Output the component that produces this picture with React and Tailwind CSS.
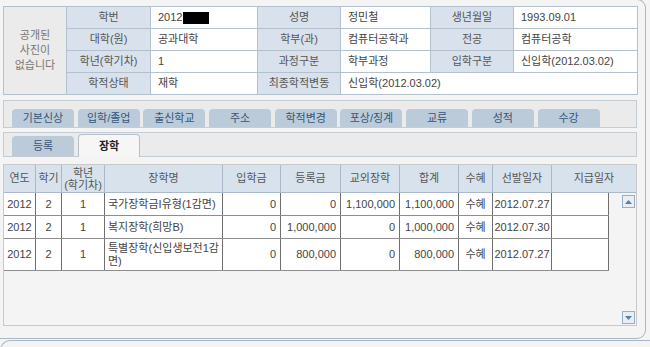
import React from "react";

const font = "font-['Liberation_Sans','Noto_Sans_CJK_KR',sans-serif]";
const lab = "bg-[#d9e2ec] border border-[#b3c1cf] text-center text-[#555] font-normal";
const val = "bg-white border border-[#b3c1cf] pl-[7px] text-[#444] text-left";

const mainTabs = ["기본신상", "입학/졸업", "출신학교", "주소", "학적변경", "포상/징계", "교류", "성적", "수강"];

const rows = [
  ["2012", "2", "1", "국가장학금I유형(1감면)", "0", "0", "1,100,000", "1,100,000", "수혜", "2012.07.27"],
  ["2012", "2", "1", "복지장학(희망B)", "0", "1,000,000", "0", "1,000,000", "수혜", "2012.07.30"],
  ["2012", "2", "1", "특별장학(신입생보전1감\n면)", "0", "800,000", "0", "800,000", "수혜", "2012.07.27"],
];

const align = ["text-center", "text-center", "text-center", "text-left pl-[3px] whitespace-pre-line", "text-right pr-[4px]", "text-right pr-[4px]", "text-right pr-[4px]", "text-right pr-[4px]", "text-center", "text-center"];

function Arrow({ down }) {
  return (
    <div className="w-[13px] h-[13px] border border-[#98aec3] bg-[#e8eef4] flex items-center justify-center">
      <svg width="7" height="4" viewBox="0 0 7 4">
        {down ? <path d="M0 0 H7 L3.5 4 Z" fill="#5b7ea3" /> : <path d="M0 4 H7 L3.5 0 Z" fill="#5b7ea3" />}
      </svg>
    </div>
  );
}

export default function App() {
  return (
    <div className={`w-[650px] h-[347px] overflow-hidden bg-[#f4f4f4] text-[11px] ${font}`}>
      <div className="w-[646px] h-[340px] -mt-px border-t border-r border-b border-[#a9b7c6] rounded-r-[9px] pl-[3px] pr-[8px] pt-[6px] flex flex-col">
        <table className="w-[634px] table-fixed border-collapse">
          <colgroup>
            <col className="w-[63px]" />
            <col className="w-[84px]" />
            <col className="w-[107px]" />
            <col className="w-[83px]" />
            <col className="w-[90px]" />
            <col className="w-[83px]" />
            <col className="w-[124px]" />
          </colgroup>
          <tbody>
            <tr className="h-[22px]">
              <td rowSpan={4} className="bg-[#ebebeb] border border-[#b3c1cf] text-center text-[#777] leading-[15px]">
                공개된<br />사진이<br />없습니다
              </td>
              <th className={lab}>학번</th>
              <td className={val}>
                <span className="inline-flex items-center">2012<span className="inline-block w-[26px] h-[12px] bg-black ml-[1px]" /></span>
              </td>
              <th className={lab}>성명</th>
              <td className={val}>정민철</td>
              <th className={lab}>생년월일</th>
              <td className={val}>1993.09.01</td>
            </tr>
            <tr className="h-[22px]">
              <th className={lab}>대학(원)</th>
              <td className={val}>공과대학</td>
              <th className={lab}>학부(과)</th>
              <td className={val}>컴퓨터공학과</td>
              <th className={lab}>전공</th>
              <td className={val}>컴퓨터공학</td>
            </tr>
            <tr className="h-[22px]">
              <th className={lab}>학년(학기차)</th>
              <td className={val}>1</td>
              <th className={lab}>과정구분</th>
              <td className={val}>학부과정</td>
              <th className={lab}>입학구분</th>
              <td className={val}>신입학(2012.03.02)</td>
            </tr>
            <tr className="h-[22px]">
              <th className={lab}>학적상태</th>
              <td className={val}>재학</td>
              <th className={lab}>최종학적변동</th>
              <td colSpan={3} className={val}>신입학(2012.03.02)</td>
            </tr>
          </tbody>
        </table>

        <div className="mt-[5px] h-[28px] border border-[#c4ccd4] bg-[#ebebeb] flex items-end gap-[3.7px] pl-[8px]">
          {mainTabs.map((t) => (
            <div key={t} className="w-[62px] h-[18px] rounded-t-[4px] bg-[#bccbd9] text-[#34557a] flex items-center justify-center">
              {t}
            </div>
          ))}
        </div>

        <div className="mt-[4px] h-[25px] border border-[#c4ccd4] bg-[#ebebeb] flex items-end gap-[4px] pl-[8px]">
          <div className="w-[62px] h-[20px] rounded-t-[4px] bg-[#bccbd9] text-[#34557a] flex items-center justify-center">등록</div>
          <div className="w-[62px] h-[23px] -mb-px rounded-t-[4px] bg-[#f6f6f6] border border-b-0 border-[#b7c0c9] text-[#222] font-bold flex items-center justify-center">장학</div>
        </div>

        <div className="mt-[7px] h-[162px] border border-[#c9c9c9] bg-[#f4f4f4] flex flex-col">
          <div className="grid grid-cols-[32px_26px_43px_118px_58px_60px_59px_59px_34px_59px_84px] h-[28px] bg-[#d8e2ec] border-b border-[#a9b9c9] text-[#555]">
            {["연도", "학기", null, "장학명", "입학금", "등록금", "교외장학", "합계", "수혜", "선발일자", "지급일자"].map((h, i) => (
              <div key={i} className={`flex items-center justify-center text-center ${i < 10 ? "border-r border-[#a9b9c9]" : ""}`}>
                {h === null ? <span className="leading-[12px]">학년<br />(학기차)</span> : h}
              </div>
            ))}
          </div>
          <div className="flex flex-1">
            <div className="w-[605px]">
              {rows.map((r, ri) => (
                <div key={ri} className={`grid grid-cols-[32px_26px_43px_118px_58px_60px_59px_59px_34px_59px_57px] bg-white border-b border-[#8d8d8d] text-[#444] ${ri === 2 ? "h-[32px]" : "h-[23px]"}`}>
                  {r.map((c, ci) => (
                    <div key={ci} className={`border-r border-[#6f6f6f] flex items-center leading-[13px] ${align[ci]} ${ci === 3 ? "justify-start" : ci >= 4 && ci <= 7 ? "justify-end" : "justify-center"}`}>
                      {c}
                    </div>
                  ))}
                  <div className="border-r border-[#6f6f6f]" />
                </div>
              ))}
            </div>
            <div className="flex-1 flex flex-col justify-between items-end pt-[2px] pb-[1px] pr-[1px]">
              <Arrow />
              <Arrow down />
            </div>
          </div>
        </div>
      </div>
      <div className="mt-[1px] h-[10px] border-t border-l border-[#a9b7c6] rounded-tl-[10px]" />
    </div>
  );
}
